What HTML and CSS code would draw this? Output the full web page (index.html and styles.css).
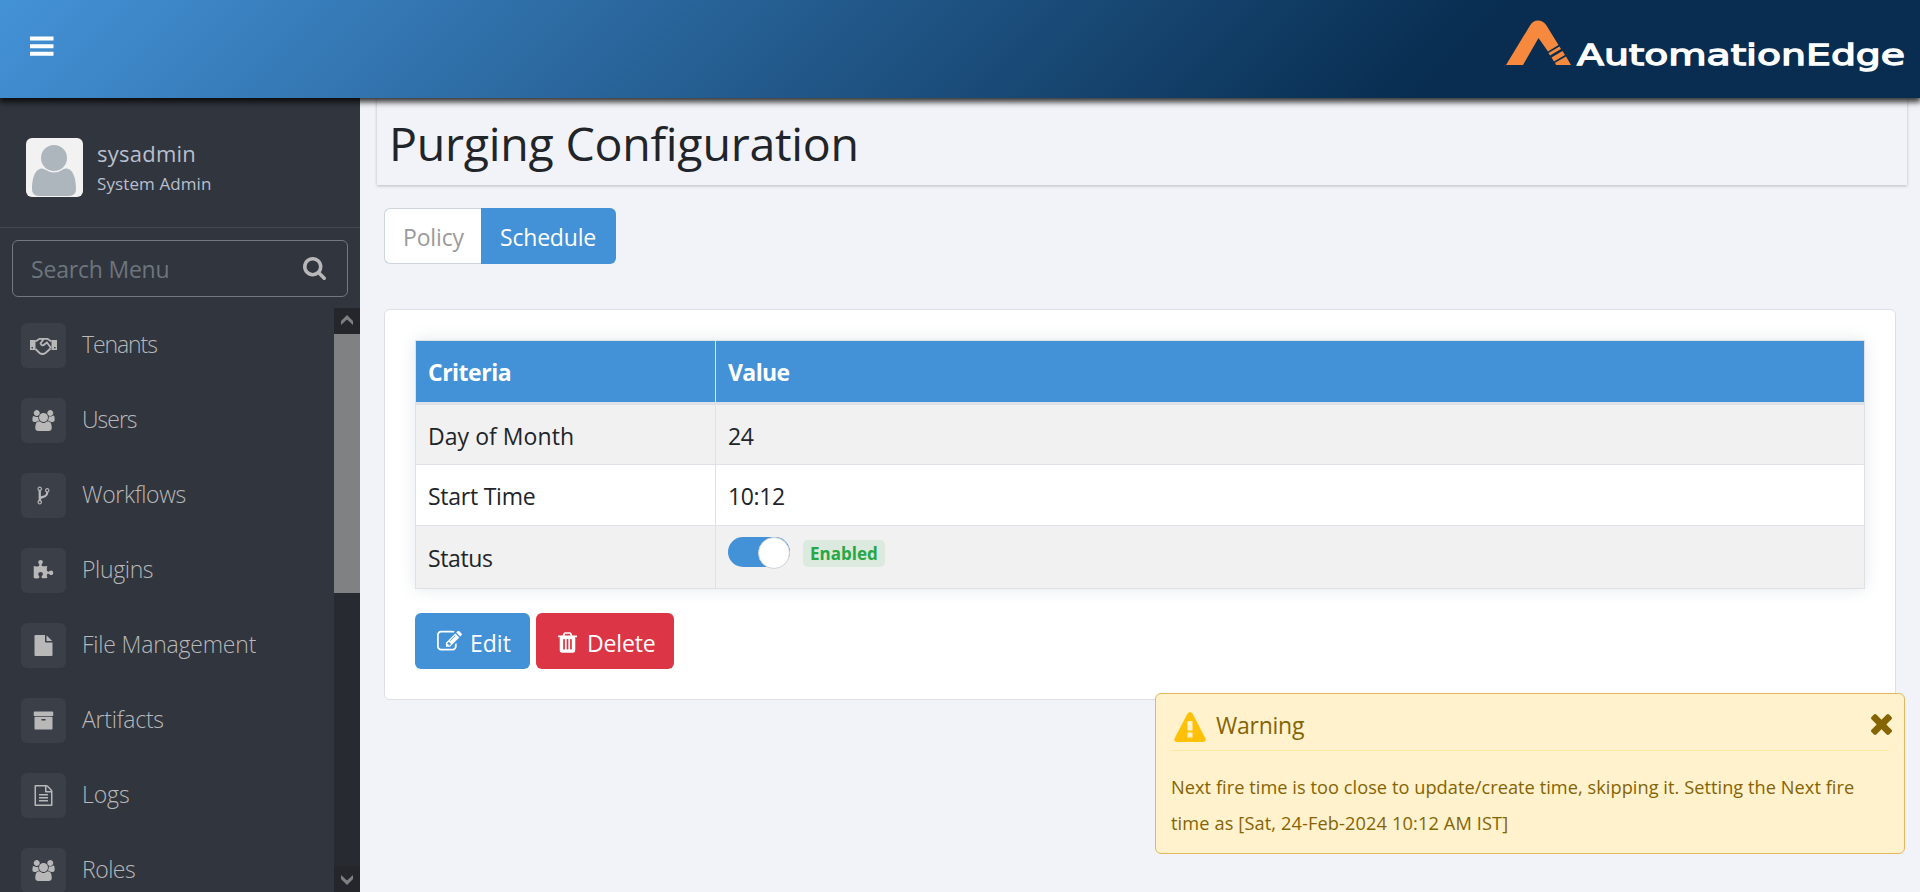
FILE: index.html
```html
<!DOCTYPE html>
<html lang="en">
<head>
<meta charset="utf-8">
<title>Purging Configuration</title>
<link rel="stylesheet" href="styles.css">
</head>
<body>
<svg class="defs" width="0" height="0">
  <symbol id="users" viewBox="-64 0 1920 1792"><path d="M529 896q-162 5-265 128h-134q-82 0-138-40.500t-56-118.500q0-353 124-353 6 0 43.500 21t97.500 42.500 119 21.500q67 0 133-23-5 37-5 66 0 159 92 293zm1071 637q0 120-73 189.500t-194 69.500h-874q-121 0-194-69.500t-73-189.500q0-53 3.500-103.500t14-109 26.500-108.500 43-97.500 62-81 85.500-53.500 111.500-20q10 0 43 21.500t73 48 107 48 135 21.500 135-21.500 107-48 73-48 43-21.500q61 0 111.500 20t85.500 53.500 62 81 43 97.500 26.500 108.500 14 109 3.500 103.500zm-1024-1277q0 106-75 181t-181 75-181-75-75-181 75-181 181-75 181 75 75 181zm704 384q0 159-112.500 271.500t-271.500 112.500-271.500-112.500-112.500-271.500 112.500-271.500 271.500-112.500 271.500 112.500 112.500 271.500zm576 225q0 78-56 118.500t-138 40.500h-134q-103-123-265-128 92-134 92-293 0-29-5-66 66 23 133 23 59 0 119-21.500t97.500-42.500 43.500-21q124 0 124 353zm-128-609q0 106-75 181t-181 75-181-75-75-181 75-181 181-75 181 75 75 181z"/></symbol>
</svg>

<header class="topbar">
  <svg class="menu-icon" viewBox="0 0 24 20"><path d="M0 .5h23.500v4H0zM0 8.200h23.500v4H0zM0 15.800h23.500v4H0z"/></svg>
  <div class="brand">
    <svg class="brand-mark" viewBox="0 0 66 46"><path d="M0 45L24 5.500Q27 .5 32 .5T40.500 5.500L52.500 25 42 31.500 32.500 18 17 45z"/><path d="M42.500 33L53.500 26.500 55 29 44 35.500zM45.500 37.500L56.500 31 59 35 48 41.500zM49 42.800L60 36.500 65 45H50z"/></svg>
    <svg class="brand-name" viewBox="0 0 330 30" role="img" aria-label="AutomationEdge"><text x="0" y="22.500" textLength="328" lengthAdjust="spacingAndGlyphs">AutomationEdge</text></svg>
  </div>
</header>

<div class="shell">
  <aside class="sidebar">
    <div class="profile">
      <svg class="avatar" viewBox="0 0 57 59"><rect width="57" height="59" rx="6"/><circle cx="28" cy="20" r="13"/><path d="M15 30.500C8 32 6 42 6 51Q6 58 13 58H43Q50 58 50 51C50 42 48 32 41 30.500Q38 30 36 32 32 34.500 28 34.500T20 32Q17 30 15 30.500z"/></svg>
      <div class="who"><div class="user">sysadmin</div><div class="role">System Admin</div></div>
    </div>
    <div class="search"><span>Search Menu</span>
      <svg viewBox="64 128 1664 1664"><path d="M1216 832q0-185-131.500-316.500t-316.500-131.500-316.500 131.500-131.500 316.500 131.500 316.500 316.500 131.500 316.500-131.500 131.500-316.500zm512 832q0 52-38 90t-90 38q-54 0-90-38l-343-342q-179 124-399 124-143 0-273.500-55.500t-225-150-150-225-55.500-273.500 55.500-273.500 150-225 225-150 273.500-55.500 273.500 55.500 225 150 150 225 55.500 273.500q0 220-124 399l343 343q37 37 37 90z"/></svg>
    </div>
    <div class="nav-wrap">
      <nav class="nav">
        <a><i><svg class="w27" viewBox="0 0 27 18"><path fill-rule="evenodd" d="M0 3h5.500v10H0zM1.500 10v1.500h1.500V10zM21.500 3H27v10h-5.500zM24 10v1.500h1.500V10z"/><path class="ln" d="M5.500 4.500L9.500 1.800h8l4 2.700M5.500 12l4 4q3 2 6 0l5-4.500M13.500 2L10.500 6.500q1.500 3.500 4.500.5l2-1.500 4 5.500"/></svg></i><span class="t-ten">Tenants</span></a>
        <a><i><svg class="w23" viewBox="-64 0 1920 1792"><use href="#users" x="-64" width="1920" height="1792"/></svg></i><span class="t-usr">Users</span></a>
        <a><i><svg class="w21" viewBox="0 0 1792 1792"><path d="M672 1472q0-40-28-68t-68-28-68 28-28 68 28 68 68 28 68-28 28-68zm0-1152q0-40-28-68t-68-28-68 28-28 68 28 68 68 28 68-28 28-68zm640 128q0-40-28-68t-68-28-68 28-28 68 28 68 68 28 68-28 28-68zm96 0q0 52-26 96.500t-70 69.500q-2 287-226 414-67 38-203 81-128 40-169.500 71t-41.500 100v26q44 25 70 69.500t26 96.500q0 80-56 136t-136 56-136-56-56-136q0-52 26-96.500t70-69.500v-820q-44-25-70-69.500t-26-96.500q0-80 56-136t136-56 136 56 56 136q0 52-26 96.500t-70 69.500v497q54-26 154-57 55-17 87.500-29.500t70.500-31 59-39.500 40.500-51 28-69.500 8.500-91.500q-44-25-70-69.500t-26-96.500q0-80 56-136t136-56 136 56 56 136z"/></svg></i><span class="t-wf">Workflows</span></a>
        <a><i><svg class="w21" viewBox="0 0 1792 1792"><path d="M1728 1098q0 81-44.500 135t-123.500 54q-41 0-77.500-17.500t-59-38-56.500-38-71-17.500q-110 0-110 124 0 39 16 115t15 115v5q-22 0-33 1-34 3-97.500 11.500t-115.500 13.500-98 5q-61 0-103-26.500t-42-83.500q0-37 17.500-71t38-56.500 38-59 17.500-77.500q0-79-54-123.500t-135-44.500q-84 0-143 45.500t-59 127.500q0 43 15 83t33.500 64.500 33.500 53 15 50.500q0 45-46 89-37 35-117 35-95 0-245-24-9-2-27.500-4t-27.500-4l-13-2q-1 0-3-1-2 0-2-1v-1024q2 1 17.500 3.500t34 5 21.500 3.500q150 24 245 24 80 0 117-35 46-44 46-89 0-22-15-50.500t-33.500-53-33.500-64.500-15-83q0-82 59-127.500t144-45.500q80 0 134 44.500t54 123.500q0 41-17.500 77.500t-38 59-38 56.500-17.500 71q0 57 42 83.500t103 26.500q64 0 180-15t163-17v2q-1 2-3.500 17.500t-5 34-3.500 21.500q-24 150-24 245 0 80 35 117 44 46 89 46 22 0 50.500-15t53-33.500 64.500-33.500 83-15q82 0 127.500 59t45.500 143z"/></svg></i><span class="t-plg">Plugins</span></a>
        <a><i><svg class="w21" viewBox="0 0 1792 1792"><path d="M1152 512v-472q22 14 36 28l408 408q14 14 28 36h-472zm-128 32q0 40 28 68t68 28h544v1056q0 40-28 68t-68 28h-1344q-40 0-68-28t-28-68v-1600q0-40 28-68t68-28h800v544z"/></svg></i><span class="t-fm">File Management</span></a>
        <a><i><svg class="w21" viewBox="0 0 1792 1792"><path d="M1088 832q0-26-19-45t-45-19h-256q-26 0-45 19t-19 45 19 45 45 19h256q26 0 45-19t19-45zm576-192v960q0 26-19 45t-45 19h-1408q-26 0-45-19t-19-45v-960q0-26 19-45t45-19h1408q26 0 45 19t19 45zm64-448v256q0 26-19 45t-45 19h-1536q-26 0-45-19t-19-45v-256q0-26 19-45t45-19h1536q26 0 45 19t19 45z"/></svg></i><span class="t-art">Artifacts</span></a>
        <a><i><svg class="w21" viewBox="0 0 1792 1792"><path d="M1596 380q28 28 48 76t20 88v1152q0 40-28 68t-68 28h-1344q-40 0-68-28t-28-68v-1600q0-40 28-68t68-28h896q40 0 88 20t76 48zm-444-244v376h376q-10-29-22-41l-313-313q-12-12-41-22zm384 1528v-1024h-416q-40 0-68-28t-28-68v-416h-768v1536h1280zm-1024-864q0-14 9-23t23-9h704q14 0 23 9t9 23v64q0 14-9 23t-23 9h-704q-14 0-23-9t-9-23v-64zm736 224q14 0 23 9t9 23v64q0 14-9 23t-23 9h-704q-14 0-23-9t-9-23v-64q0-14 9-23t23-9h704zm0 256q14 0 23 9t9 23v64q0 14-9 23t-23 9h-704q-14 0-23-9t-9-23v-64q0-14 9-23t23-9h704z"/></svg></i><span class="t-log">Logs</span></a>
        <a><i><svg class="w23" viewBox="-64 0 1920 1792"><use href="#users" x="-64" width="1920" height="1792"/></svg></i><span class="t-rol">Roles</span></a>
      </nav>
      <div class="scroll">
        <div class="sb-btn"><svg viewBox="0 0 12 10"><path d="M6 0L12 6V10L6 4.500 0 10V6z"/></svg></div>
        <div class="thumb"></div>
        <div class="sb-btn end"><svg viewBox="0 0 12 10"><path d="M6 10L12 4V0L6 5.500 0 0V4z"/></svg></div>
      </div>
    </div>
  </aside>

  <main class="main">
    <h1 class="title"><span>Purging Configuration</span></h1>
    <div class="tabs"><span class="tab"><b class="t-pol">Policy</b></span><span class="tab on"><b class="t-sch">Schedule</b></span></div>
    <section class="card">
      <table class="grid">
        <thead><tr><th><span class="t-cri">Criteria</span></th><th><span class="t-val">Value</span></th></tr></thead>
        <tbody>
          <tr><td><span class="t-dom">Day of Month</span></td><td><span class="t-num">24</span></td></tr>
          <tr><td><span class="t-st">Start Time</span></td><td><span class="t-num">10:12</span></td></tr>
          <tr class="last"><td><span class="t-sta">Status</span></td><td><div class="status"><span class="switch"></span><span class="badge">Enabled</span></div></td></tr>
        </tbody>
      </table>
      <div class="actions">
        <span class="btn edit"><svg viewBox="0 0 1792 1792"><path d="M888 1184l116-116-152-152-116 116v56h96v96h56zm440-720q-16-16-33 1l-350 350q-17 17-1 33t33-1l350-350q17-17 1-33zm80 594v190q0 119-84.500 203.500t-203.500 84.500h-832q-119 0-203.500-84.500t-84.500-203.500v-832q0-119 84.500-203.500t203.500-84.500h832q63 0 117 25 15 7 18 23 3 17-9 29l-49 49q-14 14-32 8-23-6-45-6h-832q-66 0-113 47t-47 113v832q0 66 47 113t113 47h832q66 0 113-47t47-113v-126q0-13 9-22l64-64q15-15 35-7t20 29zm-96-738l288 288-672 672h-288v-288zm444 132l-92 92-288-288 92-92q28-28 68-28t68 28l152 152q28 28 28 68t-28 68z"/></svg><b class="t-edit">Edit</b></span>
        <span class="btn del"><svg viewBox="192 128 1408 1536"><path d="M704 1376v-704q0-14-9-23t-23-9h-64q-14 0-23 9t-9 23v704q0 14 9 23t23 9h64q14 0 23-9t9-23zm256 0v-704q0-14-9-23t-23-9h-64q-14 0-23 9t-9 23v704q0 14 9 23t23 9h64q14 0 23-9t9-23zm256 0v-704q0-14-9-23t-23-9h-64q-14 0-23 9t-9 23v704q0 14 9 23t23 9h64q14 0 23-9t9-23zm-544-992h448l-48-117q-7-9-17-11h-317q-10 2-17 11zm928 32v64q0 14-9 23t-23 9h-96v948q0 83-47 143.500t-113 60.500h-832q-66 0-113-58.500t-47-141.500v-952h-96q-14 0-23-9t-9-23v-64q0-14 9-23t23-9h309l70-167q15-37 54-63t79-26h320q40 0 79 26t54 63l70 167h309q14 0 23 9t9 23z"/></svg><b class="t-del">Delete</b></span>
      </div>
    </section>
  </main>
</div>

<div class="toast">
  <div class="toast-head">
    <svg class="warn" viewBox="0 0 32 30"><path fill-rule="evenodd" d="M13.500 1.500Q16-1.500 18.500 1.500L31.500 26.500Q32.500 29.500 29.500 30H2.500Q-.5 29.500 .5 26.500zM13.500 9v9.500h5V9zM13.500 20.500v5h5v-5z"/></svg>
    <span class="t-warn">Warning</span>
    <svg class="close" viewBox="302 366 1188 1188"><path d="M1490 1322q0 40-28 68l-136 136q-28 28-68 28t-68-28l-294-294-294 294q-28 28-68 28t-68-28l-136-136q-28-28-28-68t28-68l294-294-294-294q-28-28-28-68t28-68l136-136q28-28 68-28t68 28l294 294 294-294q28-28 68-28t68 28l136 136q28 28 28 68t-28 68l-294 294 294 294q28 28 28 68z"/></svg>
  </div>
  <p class="msg"><span class="m1">Next fire time is too close to update/create time, skipping it. Setting the Next fire</span><br><span class="m2">time as [Sat, 24-Feb-2024 10:12 AM IST]</span></p>
</div>
</body>
</html>
```
FILE: styles.css
```css
* { box-sizing: border-box; }
html, body { height: 100%; margin: 0; overflow: hidden; }
body { font-family: "Open Sans", "Noto Sans", sans-serif; font-size: 23px; line-height: 36px; color: #212529; background: #f2f3f8; display: flex; flex-direction: column; }
svg { display: block; flex: none; }
span, b { white-space: nowrap; }
b { font-weight: 400; }
.defs { display: none; }

.topbar { height: 98px; flex: none; position: relative; z-index: 2; display: flex; justify-content: space-between; align-items: flex-start; padding: 0 13px 0 30px; background: linear-gradient(135deg, #4492d7, #082d50 75%); box-shadow: 0 3px 6px 1px rgba(0, 0, 0, .8); }
.menu-icon { width: 24px; height: 20px; margin-top: 36px; fill: #fff; }
.brand { display: flex; padding-top: 20px; }
.brand-mark { width: 66px; height: 46px; fill: #f6893d; }
.brand-name { width: 330px; height: 30px; margin: 22px 0 0 5px; overflow: visible; }
.brand-name text { font: 400 29px "DejaVu Sans", sans-serif; fill: #fff; stroke: #fff; stroke-width: 1.300; }

.shell { flex: 1; min-height: 0; display: flex; }
.sidebar { width: 360px; flex: none; background: #31353d; display: flex; flex-direction: column; min-height: 0; }
.profile { height: 130px; flex: none; border-bottom: 1px solid #434750; display: flex; padding: 40px 0 0 26px; gap: 14px; }
.avatar { width: 57px; height: 59px; fill: #adb5bd; }
.avatar rect { fill: #f2f2f2; }
.who { color: #b8bfce; }
.user { font-size: 22px; line-height: 30px; letter-spacing: .25px; }
.role { font-size: 17px; line-height: 31px; letter-spacing: .1px; }
.search { height: 57px; flex: none; margin: 12px 12px 11px; border: 1px solid #737880; border-radius: 6px; display: flex; align-items: center; justify-content: space-between; padding: 0 21px 0 18px; color: #6c757d; letter-spacing: -.2px; }
.search svg { width: 23px; height: 23px; fill: #b8b8b9; }
.nav-wrap { flex: 1; min-height: 0; display: flex; justify-content: space-between; }
.nav { padding: 15px 0 0 21px; display: flex; flex-direction: column; gap: 30px; overflow: hidden; }
.nav a { display: flex; flex: none; gap: 16px; height: 45px; color: #b8b8b9; font-weight: 300; line-height: 43px; }
.nav i { width: 45px; height: 45px; border-radius: 6px; background: #3a3f48; display: flex; align-items: center; justify-content: center; }
.nav svg { fill: #b8b8b9; }
.w21 { width: 21px; height: 21px; }
.w23 { width: 23px; height: 21px; }
.w27 { width: 27px; height: 18px; }
.ln { fill: none; stroke: #b8b8b9; stroke-width: 1.800; }
.t-ten { letter-spacing: -1.1px; }
.t-usr { letter-spacing: -1px; }
.t-wf, .t-plg { letter-spacing: -.35px; }
.t-fm { letter-spacing: -.2px; }
.t-art { letter-spacing: -.25px; }
.t-log { letter-spacing: -.1px; }
.t-rol { letter-spacing: -.5px; }
.scroll { width: 26px; background: #282a32; display: flex; flex-direction: column; }
.sb-btn { height: 26px; flex: none; background: #25262b; display: flex; align-items: center; justify-content: center; padding-bottom: 2px; }
.sb-btn svg { width: 12px; height: 10px; fill: #7e7f81; }
.thumb { height: 259px; background: #808183; }
.end { margin-top: auto; padding: 2px 0 0; }

.main { flex: 1; min-width: 0; padding: 0 13px 0 17px; }
.title { margin: 0; height: 87px; padding: 16px 0 0 12px; font-size: 46.500px; font-weight: 400; line-height: 58px; letter-spacing: -.24px; box-shadow: 0 1px 3px rgba(0, 0, 0, .24); }
.tabs { display: flex; margin: 23px 0 0 7px; }
.tab { height: 56px; width: 97px; background: #fff; border: 1px solid #ced4da; border-right: 0; border-radius: 6px 0 0 6px; line-height: 57px; padding-left: 18px; color: #9b9b9b; letter-spacing: -.15px; }
.on { width: 135px; background: #4391d6; border: 0; border-radius: 0 6px 6px 0; line-height: 59px; padding-left: 19px; color: #fff; letter-spacing: -.2px; }
.card { margin: 45px 11px 0 7px; height: 391px; background: #fff; border: 1px solid #dcdfe3; border-radius: 6px; padding: 30px 30px; }
.grid { width: 100%; table-layout: fixed; border-collapse: collapse; box-shadow: 0 0 15px rgba(60, 90, 110, .14); }
.grid th, .grid td { border: 1px solid #dee2e6; padding: 2px 12px 0; text-align: left; height: 61px; }
.grid th { background: #4391d6; color: #fff; font-weight: 700; height: 63px; padding-top: 1px; border-bottom: 3px solid #dee2e6; }
.grid th:first-child { width: 300px; }
.grid tbody tr:nth-child(odd) { background: #f1f1f1; }
.grid .last td { height: 63px; }
.t-cri { letter-spacing: -.5px; }
.t-val { letter-spacing: -.6px; }
.t-dom { letter-spacing: .05px; }
.t-st { letter-spacing: -.25px; }
.t-num { letter-spacing: -.35px; }
.t-sta { letter-spacing: -.4px; }
.status { display: flex; align-items: center; gap: 13px; margin-top: -12px; }
.switch { width: 62px; height: 30px; border-radius: 15px; background: #4391d6; display: flex; justify-content: flex-end; }
.switch::after { content: ""; width: 30px; height: 30px; border-radius: 50%; background: #fff; border: 1px solid #ced4da; }
.badge { width: 82px; height: 27px; margin-top: 3px; border-radius: 5px; background: #dbe9de; color: #28a745; font-weight: 700; font-size: 17px; line-height: 27px; padding-left: 7px; }
.actions { display: flex; gap: 6px; margin-top: 24px; }
.btn { height: 56px; border-radius: 6px; color: #fff; display: flex; align-items: center; }
.btn svg { fill: #fff; }
.btn b { padding-top: 3px; }
.edit { width: 115px; background: #4391d6; padding-left: 22px; gap: 8px; }
.edit svg { width: 25px; height: 25px; }
.del { width: 138px; background: #dc3545; padding-left: 22px; gap: 10px; }
.del svg { width: 19px; height: 21px; margin-top: 2px; }
.t-del { letter-spacing: -.15px; }

.toast { position: absolute; z-index: 3; left: 1155px; top: 693px; width: 750px; height: 161px; background: #fff2cd; border: 1px solid #e4b75c; border-radius: 6px; padding: 0 15px; color: #856404; }
.toast-head { height: 57px; border-bottom: 1px solid #ffe8a1; display: flex; align-items: center; padding: 6px 0 0 3px; }
.warn { width: 32px; height: 30px; fill: #ffc107; margin: 3px 10px 0 0; }
.t-warn { letter-spacing: -.25px; }
.close { width: 21px; height: 21px; fill: #856404; margin: -1px -3px 0 auto; }
.msg { margin: 18px 0 0; font-size: 18.200px; line-height: 36px; }
.m1 { letter-spacing: .05px; }
.m2 { letter-spacing: .12px; }
```
